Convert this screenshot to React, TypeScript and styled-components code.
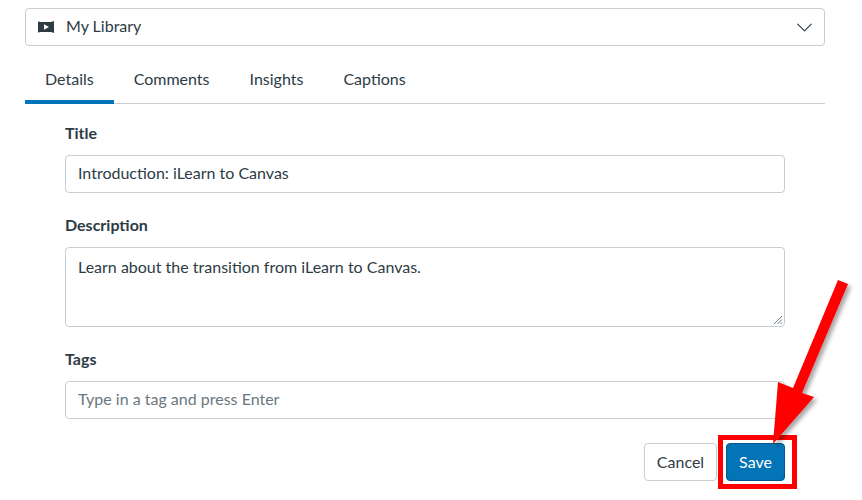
import styled, { createGlobalStyle } from "styled-components";
import { ChevronDown } from "lucide-react";

const GlobalStyle = createGlobalStyle`
  html, body {
    margin: 0;
    padding: 0;
    background: #ffffff;
  }
  body {
    font-family: "Lato", "Liberation Sans", sans-serif;
    color: #2d3b45;
  }
`;

const Page = styled.div`
  position: relative;
  width: 862px;
  height: 500px;
  overflow: hidden;
  box-sizing: border-box;
  padding: 8px 37px 0 25px;
  background: #ffffff;
`;

const LibrarySelect = styled.div`
  display: flex;
  align-items: center;
  height: 38px;
  box-sizing: border-box;
  padding: 0 6px 0 12px;
  border: 1px solid #c7cdd1;
  border-radius: 4px;
  font-size: 16px;
`;

const SelectLabel = styled.span`
  flex: 1;
  margin-left: 12px;
  padding-bottom: 3px;
`;

const Tabs = styled.div`
  display: flex;
  height: 58px;
  box-sizing: border-box;
  border-bottom: 1px solid #c7cdd1;
`;

const Tab = styled.div<{ $active?: boolean }>`
  padding: 0 20px;
  height: 58px;
  box-sizing: border-box;
  line-height: 66px;
  font-size: 16px;
  border-bottom: 4px solid ${(p) => (p.$active ? "#0374b5" : "transparent")};
`;

const Form = styled.div`
  display: flex;
  flex-direction: column;
  padding: 19px 40px 0;
`;

const Field = styled.div`
  display: flex;
  flex-direction: column;
  margin-bottom: 22px;
`;

const Label = styled.label`
  font-size: 16px;
  font-weight: 700;
  line-height: 20px;
  margin-bottom: 12px;
`;

const TextInput = styled.div<{ $placeholder?: boolean }>`
  height: 38px;
  box-sizing: border-box;
  padding: 0 12px;
  line-height: 34px;
  border: 1px solid #c7cdd1;
  border-radius: 4px;
  font-size: 16px;
  color: ${(p) => (p.$placeholder ? "#6b7780" : "#2d3b45")};
`;

const TextArea = styled.div`
  position: relative;
  height: 80px;
  box-sizing: border-box;
  padding: 0 12px;
  line-height: 38px;
  border: 1px solid #c7cdd1;
  border-radius: 4px;
  font-size: 16px;
`;

const ResizeGrip = styled.svg`
  position: absolute;
  right: 1px;
  bottom: 1px;
`;

const Actions = styled.div`
  display: flex;
  justify-content: flex-end;
  gap: 9px;
  margin-top: 2px;
`;

const CancelButton = styled.button`
  width: 73px;
  height: 38px;
  border: 1px solid #c7cdd1;
  border-radius: 4px;
  background: #ffffff;
  color: #2d3b45;
  font: 400 16px "Lato", sans-serif;
  padding: 0 0 2px;
`;

const SaveButton = styled.button`
  position: relative;
  width: 59px;
  height: 38px;
  border: 1px solid #02568a;
  border-radius: 4px;
  background: #0374b5;
  color: #ffffff;
  font: 400 16px "Lato", sans-serif;
  padding: 0 0 2px;
`;

const Highlight = styled.span`
  position: absolute;
  left: -9px;
  top: -9px;
  width: 79px;
  height: 54px;
  box-sizing: border-box;
  border: 5px solid #ff0000;
`;

const Arrow = styled.svg`
  position: absolute;
  left: 0;
  top: 0;
  pointer-events: none;
`;

function PlayIcon() {
  return (
    <svg width="16" height="12" viewBox="0 0 16 12">
      <path d="M0 0.5 L3 1 H13 L16 0 V12 L13 11 H3 L0 11.5 Z" fill="#2d3b45" />
      <path d="M6 3.2 L11 6 L6 8.8 Z" fill="#ffffff" />
    </svg>
  );
}

export default function App() {
  return (
    <Page>
      <GlobalStyle />
      <LibrarySelect>
        <PlayIcon />
        <SelectLabel>My Library</SelectLabel>
        <ChevronDown size={27} strokeWidth={1} color="#2d3b45" />
      </LibrarySelect>
      <Tabs>
        <Tab $active>Details</Tab>
        <Tab>Comments</Tab>
        <Tab>Insights</Tab>
        <Tab>Captions</Tab>
      </Tabs>
      <Form>
        <Field>
          <Label>Title</Label>
          <TextInput>Introduction: iLearn to Canvas</TextInput>
        </Field>
        <Field>
          <Label>Description</Label>
          <TextArea>
            Learn about the transition from iLearn to Canvas.
            <ResizeGrip width="10" height="10" viewBox="0 0 10 10">
              <path d="M1 9 L9 1 M4.5 9 L9 4.5 M7.5 9 L9 7.5" stroke="#6b7780" strokeWidth="1" />
            </ResizeGrip>
          </TextArea>
        </Field>
        <Field>
          <Label>Tags</Label>
          <TextInput $placeholder>Type in a tag and press Enter</TextInput>
        </Field>
        <Actions>
          <CancelButton>Cancel</CancelButton>
          <SaveButton>
            Save
            <Highlight />
          </SaveButton>
        </Actions>
      </Form>
      <Arrow width="862" height="500" viewBox="0 0 862 500">
        <defs>
          <filter id="arrow-shadow" x="-20%" y="-20%" width="140%" height="140%">
            <feDropShadow dx="3" dy="3" stdDeviation="2" floodColor="#000000" floodOpacity="0.35" />
          </filter>
        </defs>
        <path
          d="M838 280 L848 284 L802 393 L814 397 L773 444 L778 382 L793 388 Z"
          fill="#ff0000"
          filter="url(#arrow-shadow)"
        />
      </Arrow>
    </Page>
  );
}
